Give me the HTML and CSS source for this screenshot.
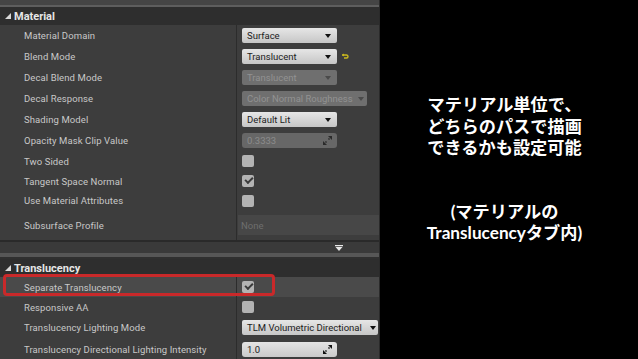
FILE: index.html
```html
<!DOCTYPE html>
<html lang="ja">
<head>
<meta charset="UTF-8" />
<title>Material Details</title>
<link rel="stylesheet" href="styles.css">
</head>
<body>
<div class="page">
  <div class="panel">
    <div class="topbar"></div>
    <div class="cat"><span class="tri"></span>Material</div>

    <div class="row r21"><div class="lab">Material Domain</div><div class="val"><span class="combo">Surface<i class="arr"></i></span></div></div>
    <div class="row r21"><div class="lab">Blend Mode</div><div class="val"><span class="combo">Translucent<i class="arr"></i></span>
      <svg class="reset" width="8" height="8" viewBox="0 0 8 8"><path d="M1 2h4.5a1.5 1.5 0 0 1 0 3H3" fill="none" stroke="#c9b81e" stroke-width="1.4"/><path d="M1 2l2-1.6v3.2z" fill="#c9b81e"/></svg></div></div>
    <div class="row r21"><div class="lab">Decal Blend Mode</div><div class="val"><span class="combo off">Translucent<i class="arr"></i></span></div></div>
    <div class="row r21"><div class="lab">Decal Response</div><div class="val"><span class="combo off wide">Color Normal Roughness<i class="arr"></i></span></div></div>
    <div class="row r21"><div class="lab">Shading Model</div><div class="val"><span class="combo">Default Lit<i class="arr"></i></span></div></div>
    <div class="row r21"><div class="lab">Opacity Mask Clip Value</div><div class="val"><span class="num off">0.3333<svg class="spin" width="9" height="9" viewBox="0 0 9 9"><path d="M5 0h4v4z M0 9V5l4 4z" fill="#2a2a2a"/><path d="M5.5 3.5l1-1 M2.5 6.5l1-1" stroke="#2a2a2a" stroke-width="1.6"/></svg></span></div></div>
    <div class="row r20"><div class="lab">Two Sided</div><div class="val"><span class="chk"></span></div></div>
    <div class="row r20"><div class="lab">Tangent Space Normal</div><div class="val"><span class="chk on"></span></div></div>
    <div class="row r19"><div class="lab">Use Material Attributes</div><div class="val"><span class="chk"></span></div></div>
    <div class="row r30"><div class="lab">Subsurface Profile</div><div class="val"><span class="asset">None</span></div></div>

    <div class="expander"><svg width="8" height="6" viewBox="0 0 8 6"><path d="M0 0h8v1.2H0z M0.5 2h7L4 6z" fill="#e8e8e8"/></svg></div>
    <div class="sep"></div>

    <div class="cat"><span class="tri"></span>Translucency</div>
    <div class="row r20 hot"><div class="lab">Separate Translucency</div><div class="val"><span class="chk on"></span></div>
      <div class="mark"></div></div>
    <div class="row r20"><div class="lab">Responsive AA</div><div class="val"><span class="chk"></span></div></div>
    <div class="row r21"><div class="lab">Translucency Lighting Mode</div><div class="val"><span class="combo full">TLM Volumetric Directional<i class="arr"></i></span></div></div>
    <div class="row r22"><div class="lab">Translucency Directional Lighting Intensity</div><div class="val"><span class="num">1.0<svg class="spin" width="9" height="9" viewBox="0 0 9 9"><path d="M5 0h4v4z M0 9V5l4 4z" fill="#111"/><path d="M5.5 3.5l1-1 M2.5 6.5l1-1" stroke="#111" stroke-width="1.6"/></svg></span></div></div>
  </div>

  <div class="note">
    <p>マテリアル単位で、<br>どちらのパスで描画<br>できるかも設定可能</p>
    <p>(マテリアルの<br>Translucencyタブ内)</p>
  </div>
</div>
</body>
</html>
```

FILE: styles.css
```css
* {
  box-sizing: border-box;
}

html, body {
  margin: 0;
  background: #000;
}

.page {
  display: flex;
  width: 638px;
  height: 359px;
  overflow: hidden;
}

/* Details panel */
.panel {
  width: 380px;
  flex: none;
  background: #3d3d3d;
  font-family: Roboto, "Liberation Sans", sans-serif;
  font-size: 9.5px;
  color: #c8c8c8;
  border-right: 1px solid #2a2a2a;
}

.topbar {
  height: 7px;
  background: #454545;
  border-bottom: 2px solid #5e5e5e;
}

.cat {
  height: 18px;
  display: flex;
  align-items: center;
  padding-left: 5px;
  background: #2e2e2e;
  color: #e6e6e6;
  font-size: 11px;
  font-weight: 700;
}

.tri {
  width: 0;
  height: 0;
  border-left: 6px solid transparent;
  border-bottom: 6px solid #d8d8d8;
  margin-right: 3px;
}

.row {
  display: flex;
  position: relative;
}

.r19 { height: 19px; }
.r20 { height: 20px; }
.r21 { height: 21px; }
.r22 { height: 22px; }
.r30 { height: 30px; }

.row.hot {
  background: #4a4a4a;
}

.lab {
  width: 237px;
  flex: none;
  display: flex;
  align-items: center;
  padding-left: 24px;
  border-right: 1px solid #2c2c2c;
  white-space: nowrap;
  overflow: hidden;
  letter-spacing: 0.1px;
}

.val {
  flex: 1;
  display: flex;
  align-items: center;
  padding-left: 5px;
}

.combo {
  width: 95px;
  height: 15px;
  display: flex;
  align-items: center;
  justify-content: space-between;
  padding: 0 6px 0 5px;
  border-radius: 2px;
  background: linear-gradient(#e6e6e6, #c6c6c6);
  color: #1c1c1c;
  font-size: 9.5px;
  white-space: nowrap;
}

.combo.wide { width: 125px; padding-right: 3px; }
.combo.full { width: 136px; padding-right: 2px; }

.combo.off {
  background: #6f6f6f;
  color: #929292;
}

.arr {
  width: 0;
  height: 0;
  border-left: 3.5px solid transparent;
  border-right: 3.5px solid transparent;
  border-top: 4px solid #111;
  margin-left: 2px;
}

.combo.off .arr {
  border-top-color: #4a4a4a;
}

.reset {
  margin-left: 4px;
}

.num {
  width: 95px;
  height: 15px;
  display: flex;
  align-items: center;
  justify-content: space-between;
  padding: 0 5px;
  border-radius: 3px;
  background: linear-gradient(#e4e4e4, #cacaca);
  color: #222;
}

.num.off {
  background: #676767;
  color: #8c8c8c;
}

.chk {
  width: 12px;
  height: 12px;
  border-radius: 2px;
  background: #b3b3b3;
  position: relative;
}

.chk.on::after {
  content: "";
  position: absolute;
  left: 3px;
  top: 2px;
  width: 6px;
  height: 3px;
  border-left: 2px solid #3a3a3a;
  border-bottom: 2px solid #3a3a3a;
  transform: rotate(-45deg);
}

.asset {
  flex: 1;
  height: 20px;
  display: flex;
  align-items: center;
  padding-left: 3px;
  margin-left: -4px;
  background: #474747;
  color: #6e6e6e;
}

.expander {
  height: 13px;
  display: flex;
  align-items: center;
  justify-content: flex-end;
  padding-right: 36px;
  background: #3a3a3a;
  border-top: 2px solid #2a2a2a;
}

.sep {
  height: 6px;
  background: #575757;
  border-bottom: 2px solid #303030;
}

/* red highlight around the row */
.mark {
  position: absolute;
  left: 3px;
  top: -3px;
  width: 272px;
  height: 22px;
  border: 3px solid #c9292a;
  border-radius: 4px;
}

/* Right-hand note */
.note {
  flex: 1;
  display: flex;
  flex-direction: column;
  align-items: center;
  padding-top: 94px;
  padding-right: 9px;
  color: #fff;
  font-family: Lato, "Noto Sans CJK JP", sans-serif;
  font-weight: 700;
  font-size: 17.2px;
  line-height: 21.5px;
  text-align: center;
}

.note p {
  margin: 0 0 42px;
}
```
